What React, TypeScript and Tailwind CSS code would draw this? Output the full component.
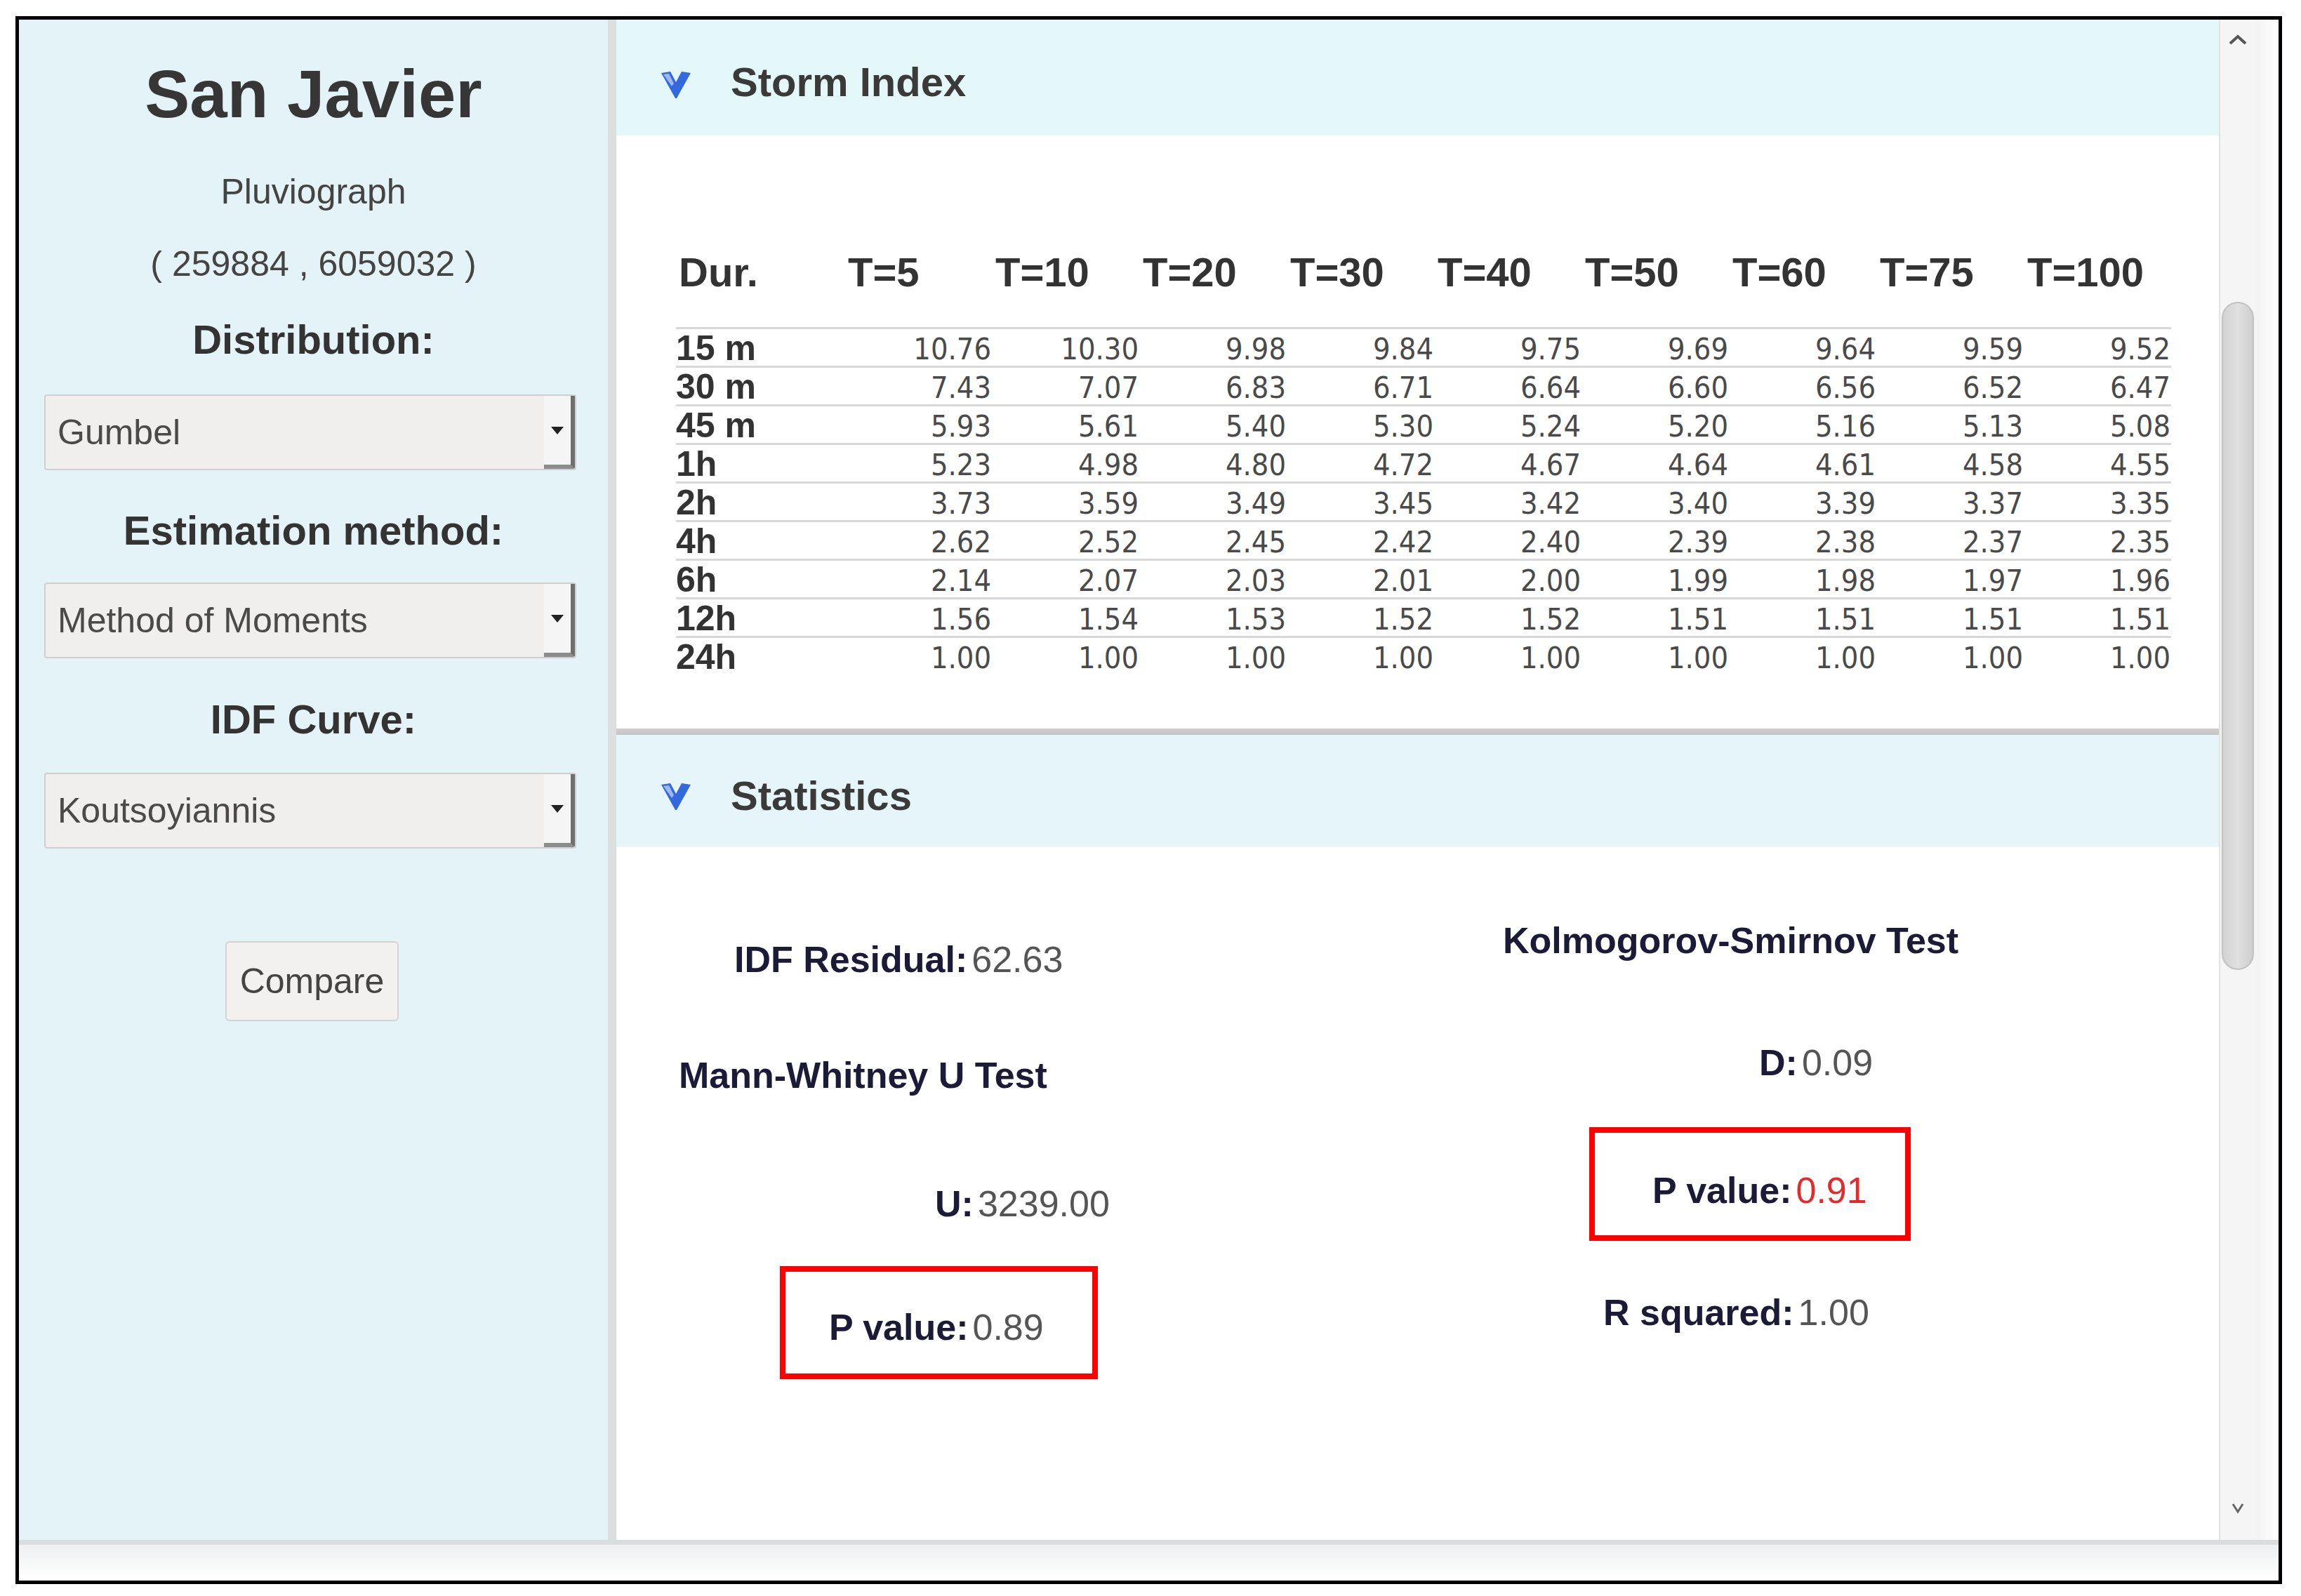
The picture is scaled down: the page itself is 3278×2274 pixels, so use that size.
import React from 'react';

const durations = ['15 m', '30 m', '45 m', '1h', '2h', '4h', '6h', '12h', '24h'];
const periods = ['T=5', 'T=10', 'T=20', 'T=30', 'T=40', 'T=50', 'T=60', 'T=75', 'T=100'];

const stormIndex: string[][] = [
  ['10.76', '10.30', '9.98', '9.84', '9.75', '9.69', '9.64', '9.59', '9.52'],
  ['7.43', '7.07', '6.83', '6.71', '6.64', '6.60', '6.56', '6.52', '6.47'],
  ['5.93', '5.61', '5.40', '5.30', '5.24', '5.20', '5.16', '5.13', '5.08'],
  ['5.23', '4.98', '4.80', '4.72', '4.67', '4.64', '4.61', '4.58', '4.55'],
  ['3.73', '3.59', '3.49', '3.45', '3.42', '3.40', '3.39', '3.37', '3.35'],
  ['2.62', '2.52', '2.45', '2.42', '2.40', '2.39', '2.38', '2.37', '2.35'],
  ['2.14', '2.07', '2.03', '2.01', '2.00', '1.99', '1.98', '1.97', '1.96'],
  ['1.56', '1.54', '1.53', '1.52', '1.52', '1.51', '1.51', '1.51', '1.51'],
  ['1.00', '1.00', '1.00', '1.00', '1.00', '1.00', '1.00', '1.00', '1.00'],
];

const sans = "font-['Liberation_Sans',Arial,sans-serif]";

const Chevron: React.FC = () => (
  <svg width="42" height="38" viewBox="0 0 42 38" className="shrink-0">
    <polygon points="0,2 13,0 21,15 29,0 42,2 22,38 20,38" fill="#3469de" />
    <polygon points="3,4 11,3 18,17 15,21" fill="#9cb8f3" />
  </svg>
);

const Select: React.FC<{ value: string; className?: string }> = ({ value, className }) => (
  <div
    className={`ml-[36px] flex h-[108px] w-[758px] items-stretch rounded-[4px] border-2 border-[#cfcfcf] bg-[#f1efee] ${className ?? ''}`}
  >
    <div className="flex flex-1 items-center pl-[17px] text-[50px] text-[#4a4a4a]">{value}</div>
    <div className="flex w-[44px] items-center justify-center rounded-br-[3px] border-r-[6px] border-b-[6px] border-r-[#6f6f6f] border-b-[#8c8c8c] bg-[#f6f5f5]">
      <svg width="18" height="11" viewBox="0 0 18 11">
        <polygon points="0,0 18,0 9,11" fill="#222" />
      </svg>
    </div>
  </div>
);

const Stat: React.FC<{ label: string; value: string; red?: boolean; className?: string }> = ({
  label,
  value,
  red,
  className,
}) => (
  <div className={`text-[52px] leading-[58px] whitespace-nowrap ${className ?? ''}`}>
    <span className="font-bold text-[#1b1b38]">{label}</span>
    <span className={`ml-[6px] ${red ? 'text-[#e42a2a]' : 'text-[#555]'}`}>{value}</span>
  </div>
);

export default function App() {
  return (
    <div className={`h-[2274px] w-[3278px] bg-white pt-[23px] pl-[22px] ${sans}`}>
      <div className="flex h-[2234px] w-[3229px] flex-col border-[5px] border-black">
        <div className="flex h-[2166px]">
          {/* Left panel */}
          <aside className="flex w-[839px] flex-col bg-[#e4f3f7] text-[#333]">
            <h1 className="mt-[51px] text-center text-[96px] leading-[110px] font-bold text-[#363636]">San Javier</h1>
            <div className="mt-[55px] text-center text-[50px] leading-[58px] text-[#444]">Pluviograph</div>
            <div className="mt-[45px] text-center text-[50px] leading-[58px] text-[#444]">( 259884 , 6059032 )</div>
            <div className="mt-[46px] text-center text-[58px] leading-[66px] font-bold">Distribution:</div>
            <Select value="Gumbel" className="mt-[45px]" />
            <div className="mt-[53px] text-center text-[58px] leading-[66px] font-bold">Estimation method:</div>
            <Select value="Method of Moments" className="mt-[41px]" />
            <div className="mt-[54px] text-center text-[58px] leading-[66px] font-bold">IDF Curve:</div>
            <Select value="Koutsoyiannis" className="mt-[43px]" />
            <button className="mt-[132px] ml-[294px] h-[114px] w-[247px] rounded-[6px] border-2 border-[#d3d3d3] bg-[#f2f1f0] text-[50px] text-[#444]">
              Compare
            </button>
          </aside>

          <div className="w-[12px] bg-[#dcdfe0]" />

          {/* Main content */}
          <main className="flex w-[2283px] flex-col overflow-hidden">
            {/* Storm Index */}
            <div className="flex h-[165px] shrink-0 items-start bg-[#e5f8f9] pt-[56px] pl-[64px]">
              <div className="mt-[18px]">
                <Chevron />
              </div>
              <h2 className="ml-[57px] text-[58px] leading-[66px] font-bold text-[#3a3a3a]">Storm Index</h2>
            </div>
            <div className="shrink-0 bg-white pt-[162px] pb-[77px] pl-[85px]">
              <div className="w-[2130px]">
                <div className="grid grid-cols-[239px_repeat(9,210px)] pb-[45px] text-[58px] leading-[66px] font-bold text-[#333]">
                  <div className="pl-[4px]">Dur.</div>
                  {periods.map((p) => (
                    <div key={p} className="pl-[6px]">
                      {p}
                    </div>
                  ))}
                </div>
                {durations.map((d, i) => (
                  <div
                    key={d}
                    className="grid h-[55px] grid-cols-[239px_repeat(9,210px)] border-t-[3px] border-[#d8d8d8]"
                  >
                    <div className="pt-[2px] text-[50px] leading-[50px] font-bold text-[#333]">{d}</div>
                    {stormIndex[i].map((v, j) => (
                      <div
                        key={j}
                        className="pt-[3px] text-right font-['DejaVu_Sans_Condensed','DejaVu_Sans',sans-serif] text-[43px] leading-[50px] text-[#4a4a4a] [font-stretch:condensed]"
                      >
                        {v}
                      </div>
                    ))}
                  </div>
                ))}
              </div>
            </div>
            <div className="h-[9px] shrink-0 bg-linear-to-b from-[#cfcfcf] to-[#c4c4c4]" />

            {/* Statistics */}
            <div className="flex h-[160px] shrink-0 items-start bg-[#e6f5fa] pt-[54px] pl-[64px]">
              <div className="mt-[15px]">
                <Chevron />
              </div>
              <h2 className="ml-[57px] text-[58px] leading-[66px] font-bold text-[#3a3a3a]">Statistics</h2>
            </div>
            <div className="flex flex-1 bg-white">
              <div className="flex w-[1160px] flex-col items-start">
                <Stat label="IDF Residual:" value="62.63" className="mt-[131px] ml-[168px]" />
                <div className="mt-[107px] ml-[89px] text-[52px] leading-[58px] font-bold text-[#1b1b38]">
                  Mann-Whitney U Test
                </div>
                <Stat label="U:" value="3239.00" className="mt-[125px] ml-[454px]" />
                <div className="mt-[60px] ml-[233px] h-[161px] w-[453px] border-[8px] border-[#ff0000] pt-[50px] pl-[62px]">
                  <Stat label="P value:" value="0.89" />
                </div>
              </div>
              <div className="flex flex-1 flex-col items-start">
                <div className="mt-[104px] ml-[103px] text-[52px] leading-[58px] font-bold text-[#1b1b38]">
                  Kolmogorov-Smirnov Test
                </div>
                <Stat label="D:" value="0.09" className="mt-[116px] ml-[468px]" />
                <div className="mt-[63px] ml-[226px] h-[162px] w-[458px] border-[8px] border-[#ff0000] pt-[53px] pl-[82px]">
                  <Stat label="P value:" value="0.91" red />
                </div>
                <Stat label="R squared:" value="1.00" className="mt-[73px] ml-[246px]" />
              </div>
            </div>
          </main>

          {/* Scrollbar */}
          <div className="flex w-[52px] flex-col items-center border-l-2 border-[#e3e3e3] bg-[#f5f5f5]">
            <svg width="28" height="17" viewBox="0 0 28 17" className="mt-[20px]">
              <polyline points="3,14 14,4 25,14" fill="none" stroke="#555" strokeWidth="4" />
            </svg>
            <div className="mt-[365px] h-[952px] w-[46px] rounded-full border-2 border-[#c2c2c2] bg-linear-to-r from-[#d2d2d2] via-[#e0e0e0] to-[#cfcfcf]" />
            <svg width="20" height="17" viewBox="0 0 20 17" className="mt-[758px]">
              <polyline points="3,3 10,14 17,3" fill="none" stroke="#666" strokeWidth="3" />
            </svg>
          </div>
          <div className="flex-1 bg-linear-to-r from-[#f3f3f3] to-white" />
        </div>
        <div className="h-[7px] bg-[#d9dde0]" />
        <div className="flex-1 bg-linear-to-b from-[#eef0f1] to-white" />
      </div>
    </div>
  );
}
